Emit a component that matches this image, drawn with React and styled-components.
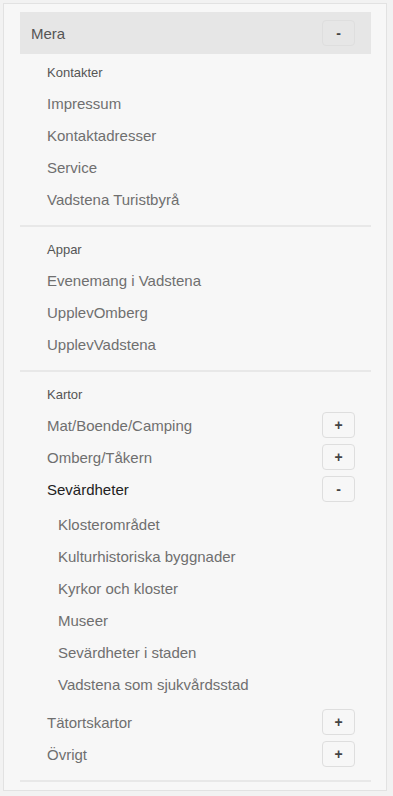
import styled, { createGlobalStyle } from "styled-components";

const GlobalStyle = createGlobalStyle`
  html, body {
    margin: 0;
    padding: 0;
    background: #f2f2f2;
    font-family: "Liberation Sans", Arial, sans-serif;
  }
`;

const sections = [
  {
    title: "Kontakter",
    items: [
      { label: "Impressum" },
      { label: "Kontaktadresser" },
      { label: "Service" },
      { label: "Vadstena Turistbyrå" },
    ],
  },
  {
    title: "Appar",
    items: [
      { label: "Evenemang i Vadstena" },
      { label: "UpplevOmberg" },
      { label: "UpplevVadstena" },
    ],
  },
  {
    title: "Kartor",
    items: [
      { label: "Mat/Boende/Camping", toggle: "+" },
      { label: "Omberg/Tåkern", toggle: "+" },
      {
        label: "Sevärdheter",
        toggle: "-",
        open: true,
        children: [
          "Klosterområdet",
          "Kulturhistoriska byggnader",
          "Kyrkor och kloster",
          "Museer",
          "Sevärdheter i staden",
          "Vadstena som sjukvårdsstad",
        ],
      },
      { label: "Tätortskartor", toggle: "+" },
      { label: "Övrigt", toggle: "+" },
    ],
  },
];

const App = () => {
  return (
    <>
      <GlobalStyle />
      <Panel>
        <Header>
          <span>Mera</span>
          <Toggle $header>-</Toggle>
        </Header>
        {sections.map((section, i) => (
          <Section key={section.title} $first={i === 0}>
            <Heading>{section.title}</Heading>
            {section.items.map((item) => (
              <div key={item.label}>
                <Row $active={item.open}>
                  <span>{item.label}</span>
                  {item.toggle && <Toggle>{item.toggle}</Toggle>}
                </Row>
                {item.children && (
                  <SubList>
                    {item.children.map((c) => (
                      <Row key={c}>
                        <span>{c}</span>
                      </Row>
                    ))}
                  </SubList>
                )}
              </div>
            ))}
          </Section>
        ))}
      </Panel>
    </>
  );
};
export default App;

const Panel = styled.div`
  box-sizing: border-box;
  margin: 3px 0 0 3px;
  width: 384px;
  height: 788px;
  background: #f7f7f7;
  border: 1px solid #e2e2e2;
  padding: 8px 15px 0 16px;
`;

const Header = styled.div`
  display: flex;
  align-items: center;
  justify-content: space-between;
  height: 42px;
  background: #e6e6e6;
  padding: 0 16px 0 11px;
  font-size: 15px;
  color: #555;
`;

const Section = styled.div`
  padding: ${({ $first }) => ($first ? "3px" : "7px")} 0 10px 27px;
  border-bottom: 2px solid #e8e8e8;
`;

const Heading = styled.div`
  height: 30px;
  display: flex;
  align-items: center;
  font-size: 13px;
  color: #555;
`;

const Row = styled.div`
  height: 32px;
  display: flex;
  align-items: center;
  justify-content: space-between;
  padding-right: 16px;
  font-size: 15px;
  color: ${({ $active }) => ($active ? "#222" : "#6f6f6f")};
`;

const SubList = styled.div`
  padding: 3px 0 6px 11px;
`;

const Toggle = styled.button`
  box-sizing: border-box;
  width: 33px;
  height: 26px;
  border: 1px solid #dedede;
  border-radius: 4px;
  background: ${({ $header }) => ($header ? "#e6e6e6" : "#f7f7f7")};
  color: #444;
  font-family: "Liberation Sans", Arial, sans-serif;
  font-size: 14px;
  font-weight: 700;
  padding: 0;
  line-height: 1;
  display: flex;
  align-items: center;
  justify-content: center;
`;
